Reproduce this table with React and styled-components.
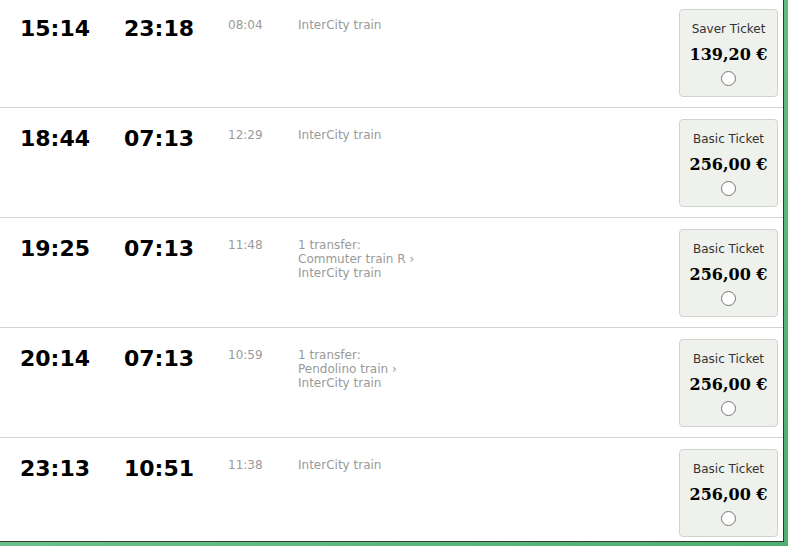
import React from 'react';
import styled, {createGlobalStyle} from "styled-components";

const GlobalStyle = createGlobalStyle`
  html, body {
    margin: 0;
    padding: 0;
    background: #ffffff;
  }
`;

const Frame = styled.div`
  width: 788px;
  height: 546px;
  box-sizing: border-box;
  padding: 0 4px 4px 0;
  background: linear-gradient(135deg, #7fcf9b, #4fae70);
  overflow: hidden;
`;

const Screen = styled.div`
  width: 784px;
  height: 542px;
  box-sizing: border-box;
  background: #ffffff;
  border-right: 1px solid #2f3d33;
  border-bottom: 1px solid #2f3d33;
  overflow: hidden;
`;

const List = styled.div`
  margin-top: -2px;
  display: flex;
  flex-direction: column;
`;

const Row = styled.div`
  display: flex;
  align-items: flex-start;
  padding: 11px 5px 10px 20px;
  border-bottom: 1px solid #d3d3d3;
`;

const Time = styled.div`
  width: 104px;
  padding-top: 7px;
  font-family: "DejaVu Sans", Verdana, sans-serif;
  font-weight: bold;
  font-size: 22px;
  line-height: 26px;
  color: #000000;
`;

const Duration = styled.div`
  width: 70px;
  padding-top: 9px;
  font-family: "DejaVu Sans", Verdana, sans-serif;
  font-size: 12px;
  line-height: 14px;
  color: #9a9a9a;
`;

const Route = styled.div`
  flex: 1;
  padding-top: 9px;
  font-family: "DejaVu Sans", Verdana, sans-serif;
  font-size: 12px;
  line-height: 14px;
  color: #9a9a9a;
`;

const TicketBox = styled.div`
  width: 99px;
  height: 88px;
  box-sizing: border-box;
  display: flex;
  flex-direction: column;
  align-items: center;
  padding-top: 12px;
  background: #eef1ec;
  border: 1px solid #cfd3cd;
  border-radius: 4px;
`;

const TicketName = styled.div`
  font-family: "DejaVu Sans", Verdana, sans-serif;
  font-size: 12px;
  line-height: 15px;
  color: #333333;
`;

const Price = styled.div`
  margin-top: 8px;
  font-family: "DejaVu Serif", Georgia, serif;
  font-weight: bold;
  font-size: 16px;
  line-height: 19px;
  color: #000000;
`;

const Radio = styled.span`
  margin-top: 7px;
  width: 13px;
  height: 13px;
  border: 1px solid #767676;
  border-radius: 50%;
  background: #ffffff;
`;

const trips = [
    {dep: "15:14", arr: "23:18", dur: "08:04", route: ["InterCity train"], ticket: "Saver Ticket", price: "139,20 €"},
    {dep: "18:44", arr: "07:13", dur: "12:29", route: ["InterCity train"], ticket: "Basic Ticket", price: "256,00 €"},
    {dep: "19:25", arr: "07:13", dur: "11:48", route: ["1 transfer:", "Commuter train R ›", "InterCity train"], ticket: "Basic Ticket", price: "256,00 €"},
    {dep: "20:14", arr: "07:13", dur: "10:59", route: ["1 transfer:", "Pendolino train ›", "InterCity train"], ticket: "Basic Ticket", price: "256,00 €"},
    {dep: "23:13", arr: "10:51", dur: "11:38", route: ["InterCity train"], ticket: "Basic Ticket", price: "256,00 €"},
];

const App = () => {
    return (
        <>
            <GlobalStyle/>
            <Frame>
                <Screen>
                    <List>
                        {trips.map((t, i) => (
                            <Row key={i}>
                                <Time>{t.dep}</Time>
                                <Time>{t.arr}</Time>
                                <Duration>{t.dur}</Duration>
                                <Route>
                                    {t.route.map((line, j) => <div key={j}>{line}</div>)}
                                </Route>
                                <TicketBox>
                                    <TicketName>{t.ticket}</TicketName>
                                    <Price>{t.price}</Price>
                                    <Radio/>
                                </TicketBox>
                            </Row>
                        ))}
                    </List>
                </Screen>
            </Frame>
        </>
    );
};

export default App;
